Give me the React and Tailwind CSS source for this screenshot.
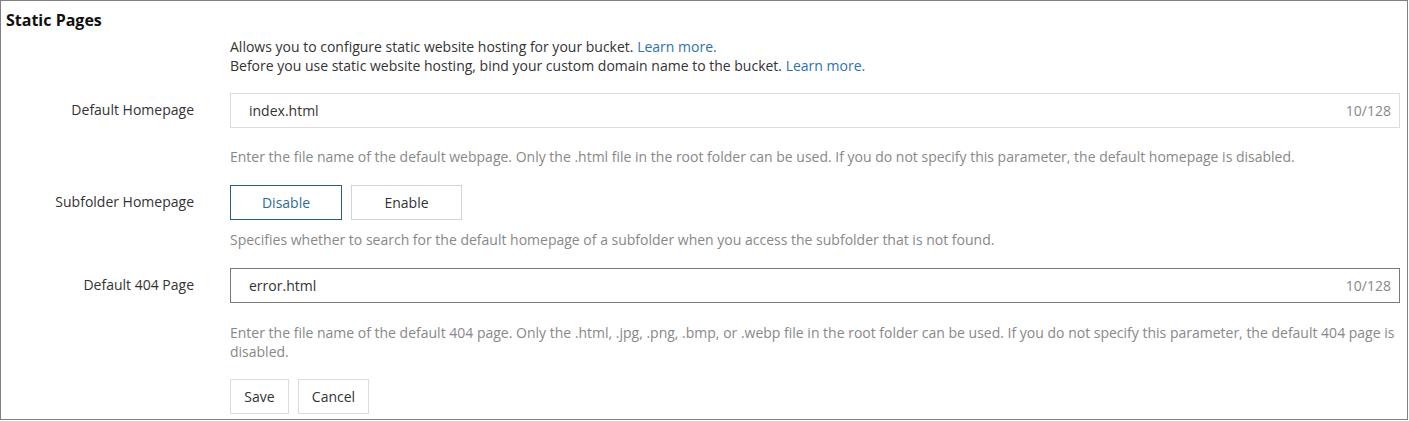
import React, { useState } from "react";

const font = { fontFamily: '"Open Sans", "Noto Sans", sans-serif' };

const Row = ({ label, children, labelClass = "" }) => (
  <div className="flex">
    <div
      className={`w-[193px] shrink-0 text-right text-[14px] text-[#333] ${labelClass}`}
    >
      {label}
    </div>
    <div className="ml-[36px] flex-1 min-w-0">{children}</div>
  </div>
);

const Help = ({ children, className = "" }) => (
  <p className={`text-[14px] leading-[19px] text-[#888] ${className}`}>
    {children}
  </p>
);

const TextField = ({ value, focused }) => (
  <div
    className={`flex h-[35px] items-center justify-between border bg-white pl-[18px] pr-[8px] text-[14px] ${
      focused ? "border-[#7a7a7a]" : "border-[#dcdcdc]"
    }`}
  >
    <input
      defaultValue={value}
      className="flex-1 bg-transparent text-[#333] outline-none"
    />
    <span className="text-[#888]">{value.length}/128</span>
  </div>
);

export default function App() {
  const [subfolder, setSubfolder] = useState("disable");

  return (
    <div style={font} className="w-[1408px] h-[420px] border border-[#808080] bg-white">
      <h2 className="pl-[5px] pt-[8px] text-[16px] font-bold leading-[22px] text-[#111]">
        Static Pages
      </h2>

      <div className="ml-[229px] mt-[6px] text-[14px] leading-[19px] text-[#333]">
        <p>
          Allows you to configure static website hosting for your bucket.{" "}
          <a className="text-[#2c72b0]">Learn more.</a>
        </p>
        <p>
          Before you use static website hosting, bind your custom domain name to
          the bucket. <a className="text-[#2c72b0]">Learn more.</a>
        </p>
      </div>

      <div className="mt-[18px] pr-[7px]">
        <Row label="Default Homepage" labelClass="pt-[6px]">
          <TextField value="index.html" />
          <Help className="mt-[19px]">
            Enter the file name of the default webpage. Only the .html file in
            the root folder can be used. If you do not specify this parameter,
            the default homepage is disabled.
          </Help>
        </Row>

        <div className="mt-[19px]">
          <Row label="Subfolder Homepage" labelClass="pt-[6px]">
            <div className="flex gap-[9px]">
              <button
                onClick={() => setSubfolder("disable")}
                className={`h-[35px] w-[112px] border text-[14px] ${
                  subfolder === "disable"
                    ? "border-[#2b5f7a] text-[#2e6b96]"
                    : "border-[#d4d4d4] text-[#333]"
                }`}
              >
                Disable
              </button>
              <button
                onClick={() => setSubfolder("enable")}
                className={`h-[35px] w-[111px] border text-[14px] ${
                  subfolder === "enable"
                    ? "border-[#2b5f7a] text-[#2e6b96]"
                    : "border-[#d4d4d4] text-[#333]"
                }`}
              >
                Enable
              </button>
            </div>
            <Help className="mt-[10px]">
              Specifies whether to search for the default homepage of a
              subfolder when you access the subfolder that is not found.
            </Help>
          </Row>
        </div>

        <div className="mt-[19px]">
          <Row label="Default 404 Page" labelClass="pt-[6px]">
            <TextField value="error.html" focused />
            <Help className="mt-[20px]">
              Enter the file name of the default 404 page. Only the .html, .jpg,
              .png, .bmp, or .webp file in the root folder can be used. If you
              do not specify this parameter, the default 404 page is disabled.
            </Help>
            <div className="mt-[18px] flex gap-[9px]">
              <button className="h-[35px] w-[59px] border border-[#dcdcdc] text-[14px] text-[#333]">
                Save
              </button>
              <button className="h-[35px] w-[71px] border border-[#dcdcdc] text-[14px] text-[#333]">
                Cancel
              </button>
            </div>
          </Row>
        </div>
      </div>
    </div>
  );
}
